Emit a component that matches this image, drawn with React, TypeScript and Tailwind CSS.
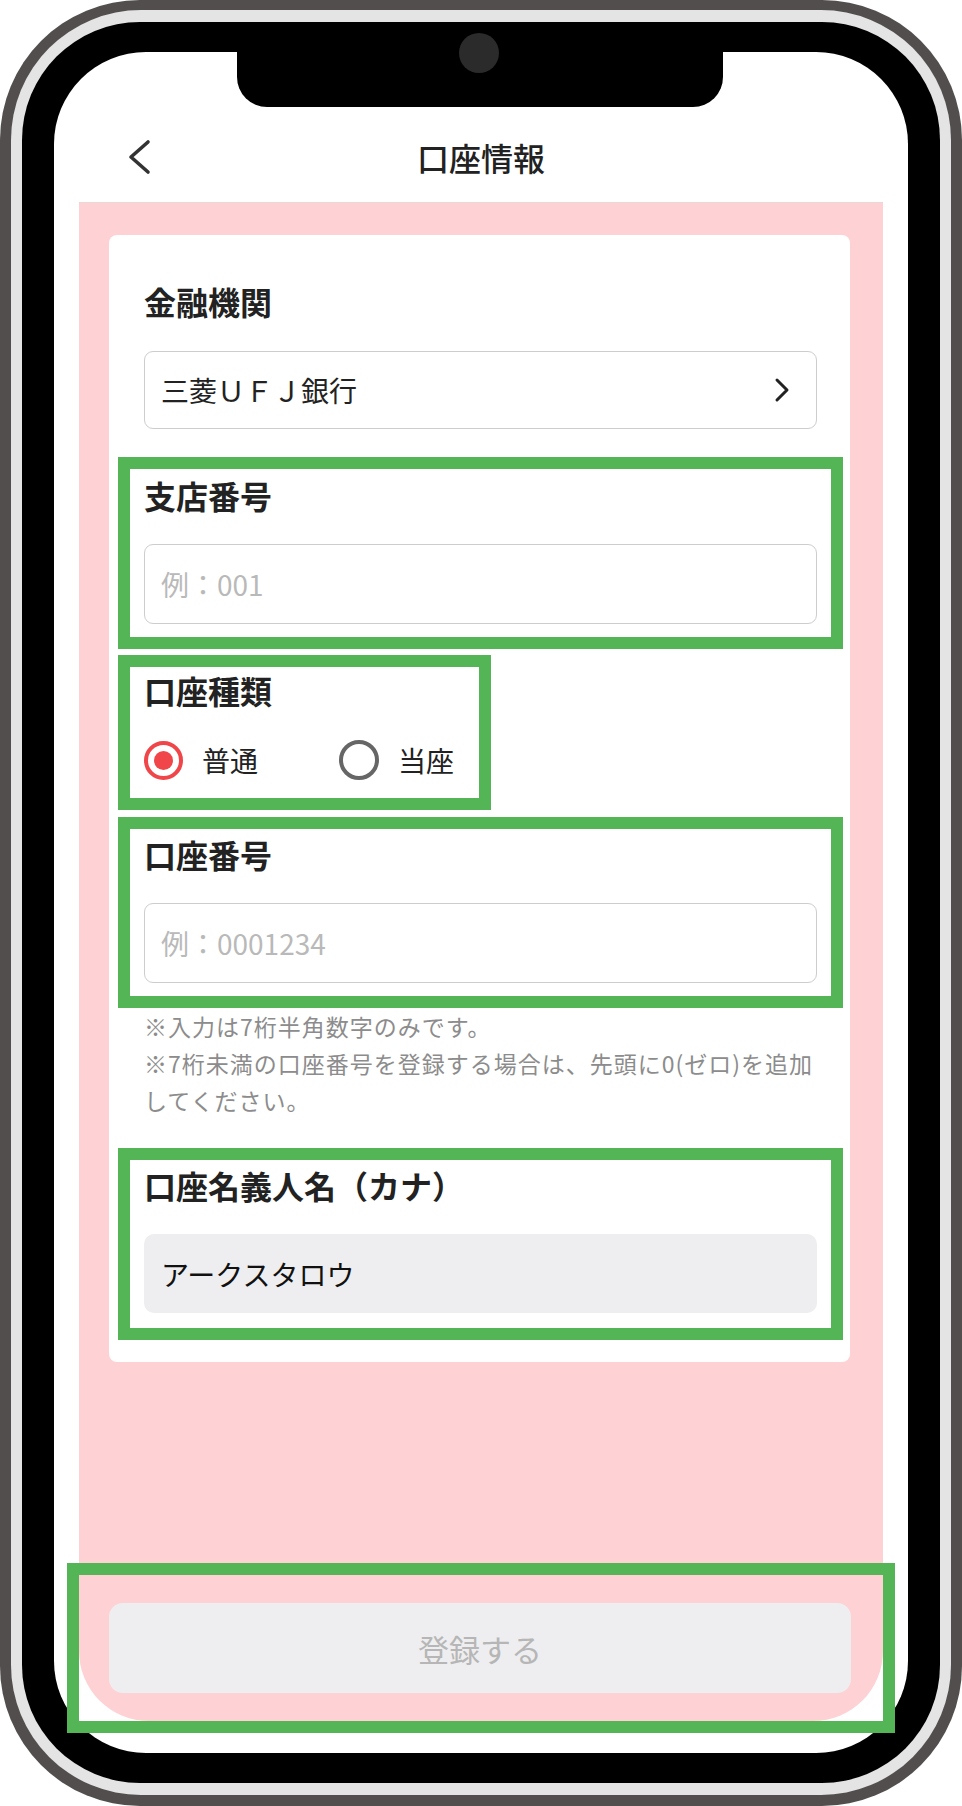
const font = "font-['Noto_Sans_CJK_JP','Noto_Sans',sans-serif]"
const green = 'border-[12px] border-[#53b555]'

function Label({ text }: { text: string }) {
  return (
    <div className="flex h-[40px] items-center text-[32px] font-bold leading-none text-[#222]">
      {text}
    </div>
  )
}

function TextBox({ placeholder }: { placeholder: string }) {
  return (
    <div className="flex h-[80px] items-center rounded-[9px] border-[1.5px] border-[#cdcdcd] pl-[16px] text-[28px] leading-none text-[#b9b9b9]">
      {placeholder}
    </div>
  )
}

function Radio({ checked, label }: { checked: boolean; label: string }) {
  return (
    <div className="flex items-center gap-[19px]">
      {checked ? (
        <span className="flex h-[39px] w-[39px] items-center justify-center rounded-full border-[4px] border-[#f04549]">
          <span className="h-[19px] w-[19px] rounded-full bg-[#f04549]" />
        </span>
      ) : (
        <span className="h-[40px] w-[40px] rounded-full border-[4px] border-[#666]" />
      )}
      <span className="text-[28px] leading-none text-[#222]">{label}</span>
    </div>
  )
}

export default function App() {
  return (
    <div className={`h-[1806px] w-[962px] bg-white ${font}`}>
      {/* phone frame */}
      <div className="h-full rounded-[140px] bg-[#534e4e] px-[11px] pb-[11px] pt-[10px]">
        <div className="h-full rounded-[130px] bg-[#e4e4e4] px-[11px] py-[12px]">
          <div className="h-full rounded-[118px] bg-black px-[32px] py-[30px]">
            <div className="relative flex h-full flex-col rounded-[92px] bg-white">
              {/* notch + camera */}
              <div className="absolute left-[183px] top-0 h-[55px] w-[486px] rounded-b-[30px] bg-black" />
              <div className="absolute -top-[19px] left-[405px] h-[40px] w-[40px] rounded-full bg-[#2b2b2b]" />

              {/* Header */}
              <div className="h-[150px] pt-[73px]">
                <div className="grid h-[64px] grid-cols-[1fr_auto_1fr] items-center">
                  <div className="pl-[72px]">
                    <svg width="26" height="36" viewBox="0 0 26 36" fill="none">
                      <polyline
                        points="22,3 5,18 22,33"
                        stroke="#333"
                        strokeWidth="3.6"
                        strokeLinecap="round"
                        strokeLinejoin="round"
                      />
                    </svg>
                  </div>
                  <h1 className="text-[32px] font-medium leading-none text-[#222]">口座情報</h1>
                  <div />
                </div>
              </div>

              {/* Content area */}
              <div className="mx-[25px] mb-[32px] flex flex-1 flex-col rounded-b-[70px] border-t border-[#ead8d6] bg-[#fed2d4] pt-[32px]">
                <div className="pl-[30px] pr-[33px]">
                  <div className="rounded-[8px] bg-white pb-[22px] pl-[35px] pr-[33px] pt-[46px]">
                    <Label text="金融機関" />
                    <div className="mt-[30px] flex h-[78px] items-center justify-between rounded-[9px] border-[1.5px] border-[#cdcdcd] pl-[16px] pr-[26px]">
                      <span className="text-[28px] leading-none text-[#222]">三菱ＵＦＪ銀行</span>
                      <svg width="16" height="26" viewBox="0 0 16 26" fill="none">
                        <polyline
                          points="3,3 13,13 3,23"
                          stroke="#222"
                          strokeWidth="3"
                          strokeLinecap="round"
                          strokeLinejoin="round"
                        />
                      </svg>
                    </div>

                    <div className={`-mx-[26px] mt-[28px] ${green} px-[14px] pb-[13px] pt-[6px]`}>
                      <Label text="支店番号" />
                      <div className="mt-[29px]">
                        <TextBox placeholder="例：001" />
                      </div>
                    </div>

                    <div className={`-ml-[26px] mt-[6px] w-[373px] ${green} px-[14px] pb-[16px] pt-[3px]`}>
                      <Label text="口座種類" />
                      <div className="mt-[28px] flex h-[44px] items-center">
                        <div className="w-[195px]">
                          <Radio checked label="普通" />
                        </div>
                        <Radio checked={false} label="当座" />
                      </div>
                    </div>

                    <div className={`-mx-[26px] mt-[7px] ${green} px-[14px] pb-[13px] pt-[5px]`}>
                      <Label text="口座番号" />
                      <div className="mt-[29px]">
                        <TextBox placeholder="例：0001234" />
                      </div>
                    </div>

                    <p className="whitespace-nowrap text-[23px] leading-[37px] tracking-[1px] text-[#8c8c8c]">
                      ※入力は7桁半角数字のみです。
                      <br />
                      ※7桁未満の口座番号を登録する場合は、先頭に0(ゼロ)を追加
                      <br />
                      してください。
                    </p>

                    <div className={`-mx-[26px] mt-[29px] ${green} px-[14px] pb-[15px] pt-[5px]`}>
                      <Label text="口座名義人名（カナ）" />
                      <div className="mt-[29px] flex h-[79px] items-center rounded-[10px] bg-[#eeeef0] pl-[17px] text-[28px] leading-none text-[#111]">
                        アークスタロウ
                      </div>
                    </div>
                  </div>
                </div>

                <div className="flex-1" />

                {/* Submit */}
                <div className={`-mx-[12px] -mb-[12px] ${green} pb-[28px] pl-[30px] pr-[32px] pt-[28px]`}>
                  <button className="flex h-[90px] w-full items-center justify-center rounded-[14px] bg-[#eeeef0] text-[31px] leading-none text-[#b6b6b6]">
                    登録する
                  </button>
                </div>
              </div>
            </div>
          </div>
        </div>
      </div>
    </div>
  )
}
